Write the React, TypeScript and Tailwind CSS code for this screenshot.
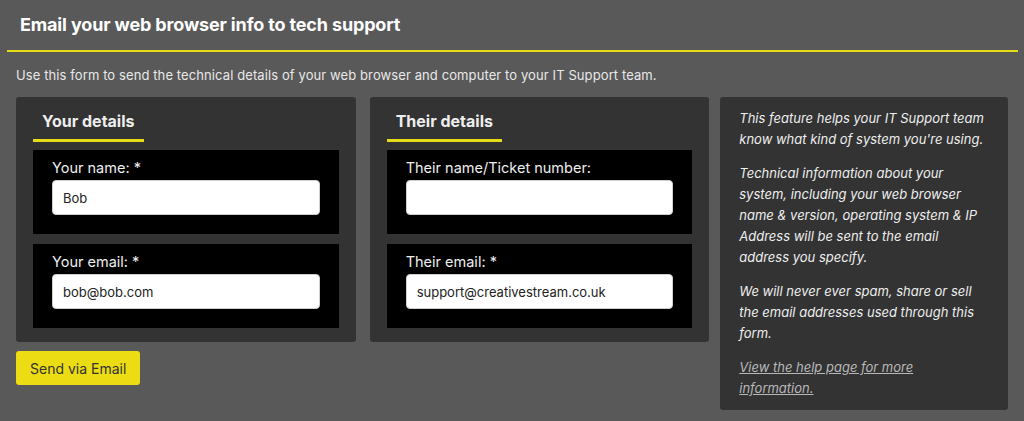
import React from 'react'

const font = { fontFamily: 'Inter, "Liberation Sans", sans-serif' }

type FieldProps = {
  label: string
  value: string
}

const Field = ({ label, value }: FieldProps) => (
  <div className="bg-black px-[19px] pt-[9px] pb-[19px]">
    <label className="block text-[14.5px] leading-[18px] text-[#eeeeee] mb-[3px]">{label}</label>
    <input
      type="text"
      defaultValue={value}
      className="block w-full h-[35px] rounded-[4px] border border-[#cfcfcf] bg-white px-[10px] text-[13px] text-[#222] outline-none"
    />
  </div>
)

type PanelProps = {
  title: string
  fields: FieldProps[]
}

const DetailsPanel = ({ title, fields }: PanelProps) => (
  <div className="flex-1 rounded-[3px] bg-[#333333] px-[17px] pt-[14px] pb-[14px]">
    <h3 className="block w-fit px-[9px] pb-[8px] border-b-[3px] border-[#e6dc15] text-[16px] leading-[20px] font-bold text-[#eeeeee]">
      {title}
    </h3>
    <div className="mt-[8px] flex flex-col gap-[10px]">
      {fields.map((f) => (
        <Field key={f.label} label={f.label} value={f.value} />
      ))}
    </div>
  </div>
)

export default function App() {
  return (
    <div className="w-[1024px] h-[421px] bg-[#595959] overflow-hidden" style={font}>
      {/* Cabecera */}
      <div className="mx-[7px] mr-[6px] h-[52px] border-b-[2px] border-[#e6dc15] flex items-center pl-[13px] pb-[2px]">
        <h2 className="text-[18px] font-bold text-white tracking-[-0.15px]">
          Email your web browser info to tech support
        </h2>
      </div>

      <div className="px-[16px]">
        <p className="mt-[14px] text-[13px] leading-[18px] tracking-[0.1px] text-[#e8e8e8]">
          Use this form to send the technical details of your web browser and computer to your IT Support team.
        </p>

        <div className="mt-[13px] flex items-start gap-[11px]">
          {/* Formulario */}
          <div className="w-[694px]">
            <div className="flex gap-[14px]">
              <DetailsPanel
                title="Your details"
                fields={[
                  { label: 'Your name: *', value: 'Bob' },
                  { label: 'Your email: *', value: 'bob@bob.com' },
                ]}
              />
              <DetailsPanel
                title="Their details"
                fields={[
                  { label: 'Their name/Ticket number:', value: '' },
                  { label: 'Their email: *', value: 'support@creativestream.co.uk' },
                ]}
              />
            </div>
            <button className="mt-[9px] h-[34px] px-[14px] rounded-[3px] bg-[#ebdc13] text-[14px] text-[#333333]">
              Send via Email
            </button>
          </div>

          {/* Información */}
          <div className="w-[288px] rounded-[3px] bg-[#333333] px-[19px] py-[11px] text-[13px] leading-[21px] italic text-[#eeeeee]">
            <p>
              This feature helps your IT Support team<br />know what kind of system you're using.
            </p>
            <p className="mt-[13px]">
              Technical information about your<br />system, including your web browser<br />name &amp; version, operating system &amp; IP<br />Address will be sent to the email<br />address you specify.
            </p>
            <p className="mt-[13px]">
              We will never ever spam, share or sell<br />the email addresses used through this<br />form.
            </p>
            <p className="mt-[13px]">
              <a href="#" className="underline text-[#b8b8b8]">
                View the help page for more<br />information.
              </a>
            </p>
          </div>
        </div>
      </div>
    </div>
  )
}
